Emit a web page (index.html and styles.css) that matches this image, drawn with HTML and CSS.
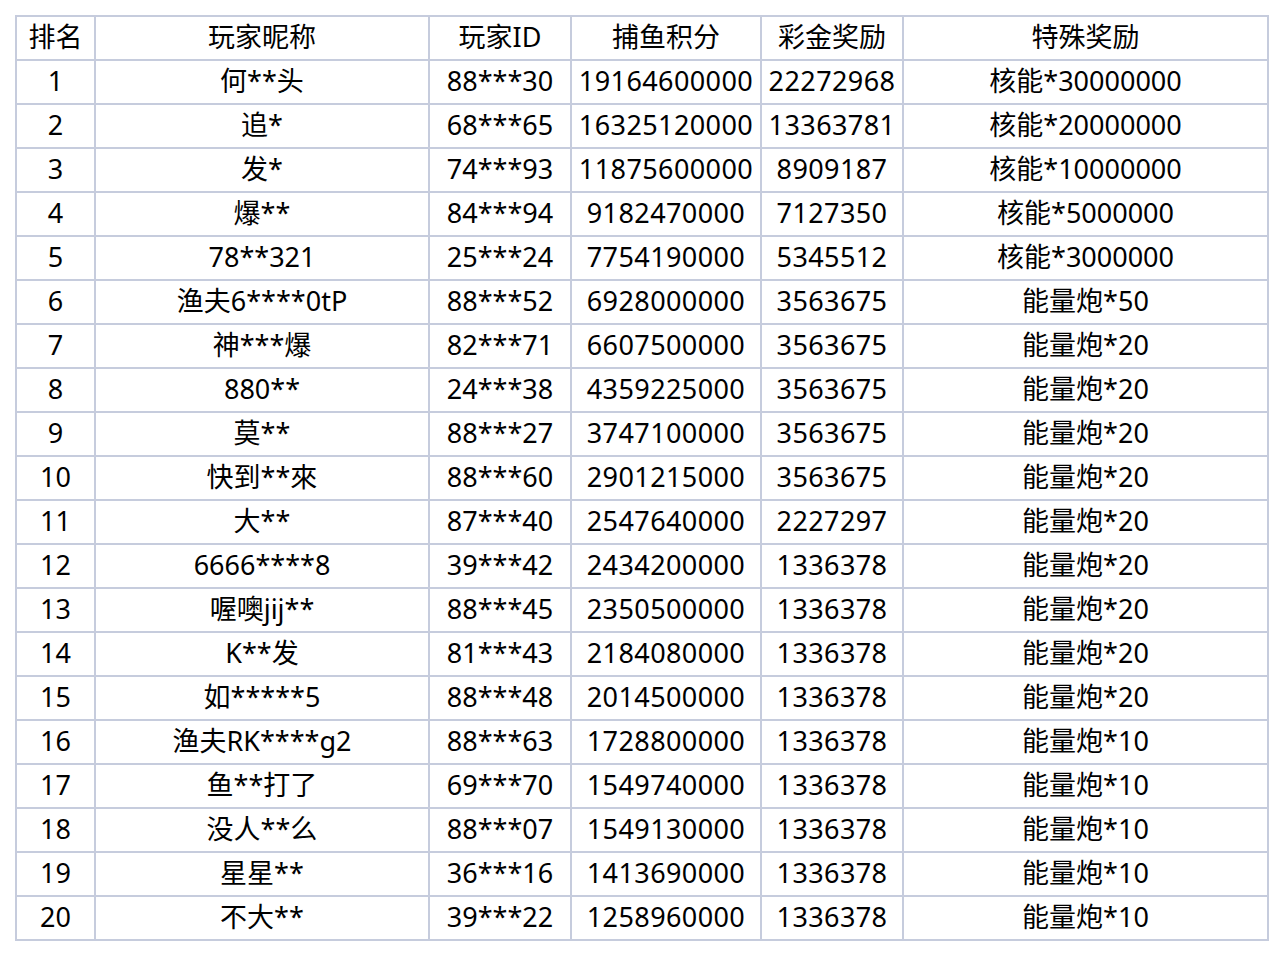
FILE: index.html
```html
<!DOCTYPE html>
<html lang="zh">
<head>
<meta charset="utf-8">
<link rel="stylesheet" href="styles.css">
</head>
<body>
<table class="rank">
<colgroup>
<col class="c1"><col class="c2"><col class="c3"><col class="c4"><col class="c5"><col class="c6">
</colgroup>
<thead>
<tr><th>排名</th><th>玩家昵称</th><th>玩家ID</th><th>捕鱼积分</th><th>彩金奖励</th><th>特殊奖励</th></tr>
</thead>
<tbody>
<tr><td>1</td><td>何**头</td><td>88***30</td><td>19164600000</td><td>22272968</td><td>核能*30000000</td></tr>
<tr><td>2</td><td>追*</td><td>68***65</td><td>16325120000</td><td>13363781</td><td>核能*20000000</td></tr>
<tr><td>3</td><td>发*</td><td>74***93</td><td>11875600000</td><td>8909187</td><td>核能*10000000</td></tr>
<tr><td>4</td><td>爆**</td><td>84***94</td><td>9182470000</td><td>7127350</td><td>核能*5000000</td></tr>
<tr><td>5</td><td>78**321</td><td>25***24</td><td>7754190000</td><td>5345512</td><td>核能*3000000</td></tr>
<tr><td>6</td><td>渔夫6****0tP</td><td>88***52</td><td>6928000000</td><td>3563675</td><td>能量炮*50</td></tr>
<tr><td>7</td><td>神***爆</td><td>82***71</td><td>6607500000</td><td>3563675</td><td>能量炮*20</td></tr>
<tr><td>8</td><td>880**</td><td>24***38</td><td>4359225000</td><td>3563675</td><td>能量炮*20</td></tr>
<tr><td>9</td><td>莫**</td><td>88***27</td><td>3747100000</td><td>3563675</td><td>能量炮*20</td></tr>
<tr><td>10</td><td>快到**來</td><td>88***60</td><td>2901215000</td><td>3563675</td><td>能量炮*20</td></tr>
<tr><td>11</td><td>大**</td><td>87***40</td><td>2547640000</td><td>2227297</td><td>能量炮*20</td></tr>
<tr><td>12</td><td>6666****8</td><td>39***42</td><td>2434200000</td><td>1336378</td><td>能量炮*20</td></tr>
<tr><td>13</td><td>喔噢jij**</td><td>88***45</td><td>2350500000</td><td>1336378</td><td>能量炮*20</td></tr>
<tr><td>14</td><td>K**发</td><td>81***43</td><td>2184080000</td><td>1336378</td><td>能量炮*20</td></tr>
<tr><td>15</td><td>如*****5</td><td>88***48</td><td>2014500000</td><td>1336378</td><td>能量炮*20</td></tr>
<tr><td>16</td><td>渔夫RK****g2</td><td>88***63</td><td>1728800000</td><td>1336378</td><td>能量炮*10</td></tr>
<tr><td>17</td><td>鱼**打了</td><td>69***70</td><td>1549740000</td><td>1336378</td><td>能量炮*10</td></tr>
<tr><td>18</td><td>没人**么</td><td>88***07</td><td>1549130000</td><td>1336378</td><td>能量炮*10</td></tr>
<tr><td>19</td><td>星星**</td><td>36***16</td><td>1413690000</td><td>1336378</td><td>能量炮*10</td></tr>
<tr><td>20</td><td>不大**</td><td>39***22</td><td>1258960000</td><td>1336378</td><td>能量炮*10</td></tr>
</tbody>
</table>
</body>
</html>
```
FILE: styles.css
```css
html, body {
  margin: 0;
  padding: 0;
  background: #ffffff;
}
body {
  padding: 15px 0 0 15px;
  font-family: "Noto Sans", "Noto Sans CJK SC", sans-serif;
  color: #000;
}
.rank {
  border-collapse: collapse;
  table-layout: fixed;
  width: 1252px;
  font-size: 27px;
}
.c1 { width: 79px; }
.c2 { width: 334px; }
.c3 { width: 142px; }
.c4 { width: 190px; }
.c5 { width: 142px; }
.c6 { width: 365px; }
.rank th, .rank td {
  border: 2px solid #c6ccdd;
  height: 42px;
  padding: 0 0 3px 0;
  text-align: center;
  vertical-align: middle;
  font-weight: normal;
  line-height: 37px;
  white-space: nowrap;
  box-sizing: border-box;
}
.rank td:nth-child(4),
.rank td:nth-child(5) {
  letter-spacing: 0.4px;
}
.rank tr { height: 44px; }
```
